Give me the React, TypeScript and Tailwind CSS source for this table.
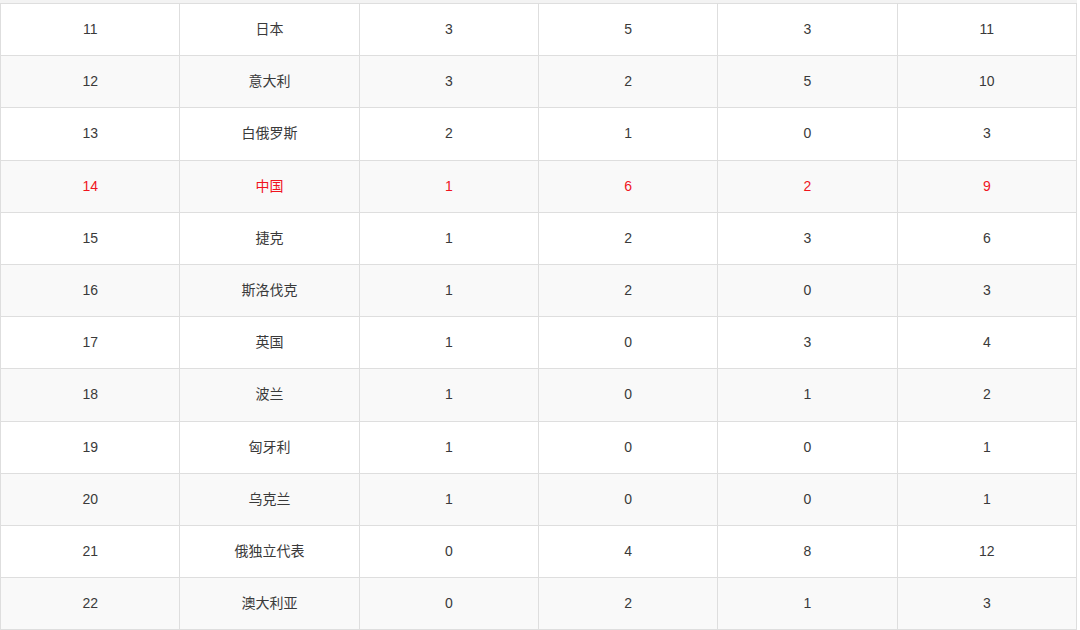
const rows = [
  ["11", "日本", "3", "5", "3", "11"],
  ["12", "意大利", "3", "2", "5", "10"],
  ["13", "白俄罗斯", "2", "1", "0", "3"],
  ["14", "中国", "1", "6", "2", "9"],
  ["15", "捷克", "1", "2", "3", "6"],
  ["16", "斯洛伐克", "1", "2", "0", "3"],
  ["17", "英国", "1", "0", "3", "4"],
  ["18", "波兰", "1", "0", "1", "2"],
  ["19", "匈牙利", "1", "0", "0", "1"],
  ["20", "乌克兰", "1", "0", "0", "1"],
  ["21", "俄独立代表", "0", "4", "8", "12"],
  ["22", "澳大利亚", "0", "2", "1", "3"],
];

export default function App() {
  return (
    <div
      className="w-[1080px] h-[630px] bg-white overflow-hidden"
      style={{ fontFamily: '"Liberation Sans", "Noto Sans CJK SC", sans-serif' }}
    >
      <div className="h-[3px] w-[1077px] bg-[#f3f3f3]" />
      <table className="w-[1077px] border-collapse table-fixed text-[14px] text-[#3a3a3a]">
        <tbody>
          {rows.map((r, i) => {
            const china = r[1] === "中国";
            return (
              <tr key={r[0]} className={i % 2 === 1 ? "bg-[#f9f9f9]" : "bg-white"}>
                {r.map((c, j) => (
                  <td
                    key={j}
                    className={`h-[52.2px] p-0 text-center align-middle border border-[#dedede] ${
                      china ? "text-[#f0141e]" : ""
                    }`}
                  >
                    {c}
                  </td>
                ))}
              </tr>
            );
          })}
        </tbody>
      </table>
    </div>
  );
}
